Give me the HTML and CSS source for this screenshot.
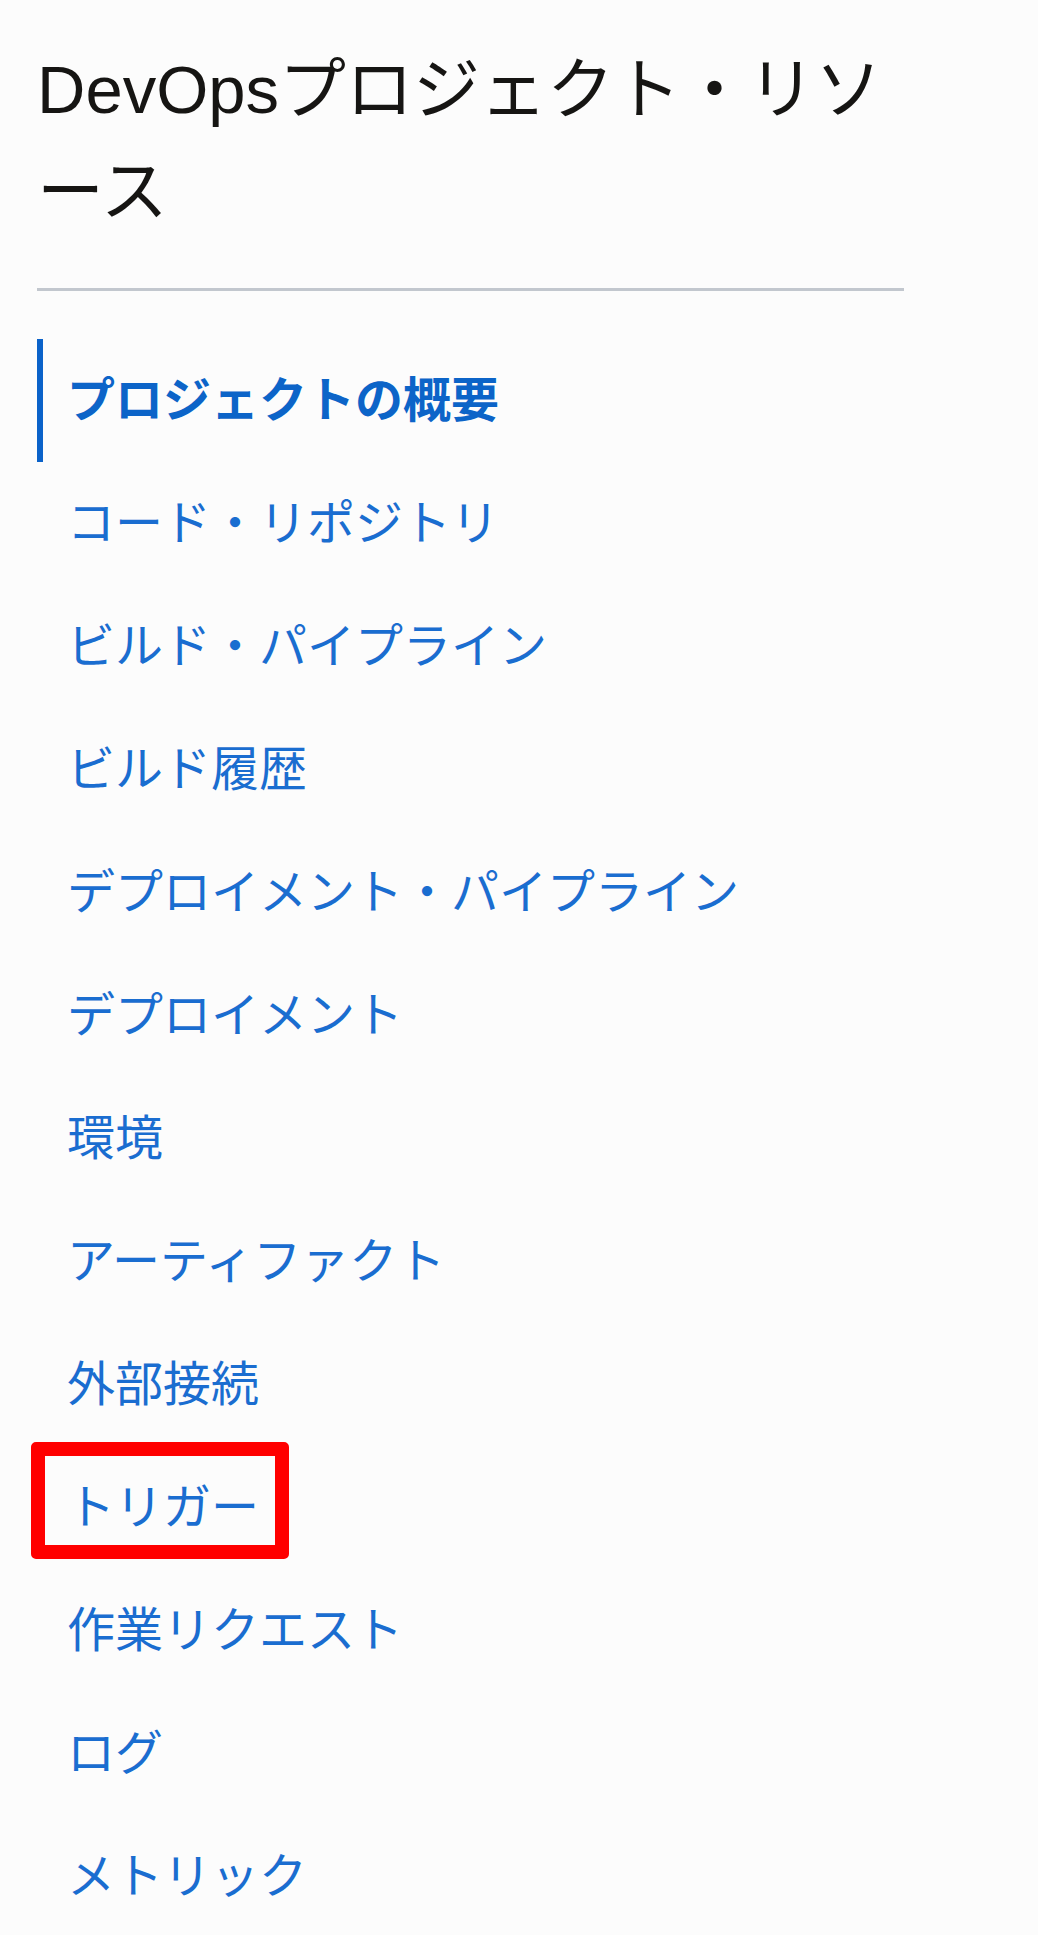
FILE: index.html
```html
<!DOCTYPE html>
<html lang="ja">
<head>
<meta charset="utf-8">
<title>DevOpsプロジェクト・リソース</title>
<link rel="stylesheet" href="styles.css">
</head>
<body>
<div class="panel">
  <h1 class="title">DevOpsプロジェクト・リソース</h1>
  <hr class="divider">
  <nav class="nav">
    <a class="item active" href="#">プロジェクトの概要</a>
    <a class="item" href="#">コード・リポジトリ</a>
    <a class="item" href="#">ビルド・パイプライン</a>
    <a class="item" href="#">ビルド履歴</a>
    <a class="item" href="#">デプロイメント・パイプライン</a>
    <a class="item" href="#">デプロイメント</a>
    <a class="item" href="#">環境</a>
    <a class="item" href="#">アーティファクト</a>
    <a class="item" href="#">外部接続</a>
    <a class="item highlighted" href="#">トリガー<span class="mark"></span></a>
    <a class="item" href="#">作業リクエスト</a>
    <a class="item" href="#">ログ</a>
    <a class="item" href="#">メトリック</a>
  </nav>
</div>
</body>
</html>
```

FILE: styles.css
```css
html, body {
  margin: 0;
  padding: 0;
}
body {
  background: #fcfcfc;
  height: 1935px;
  overflow: hidden;
  font-family: "Liberation Sans", "Noto Sans CJK JP", sans-serif;
}
.panel {
  margin-left: 37px;
  width: 867px;
  padding-top: 39px;
}
.title {
  margin: 0;
  font-weight: normal;
  font-size: 67px;
  line-height: 102px;
  color: #161513;
}
.divider {
  margin: 45px 0 0 0;
  border: none;
  height: 3px;
  background: #c2c7ce;
}
.nav {
  display: flex;
  flex-direction: column;
  margin-top: 48px;
}
.item {
  position: relative;
  display: flex;
  align-items: center;
  height: 123px;
  padding-left: 30px;
  padding-bottom: 10px;
  font-family: "Noto Sans CJK JP", sans-serif;
  font-size: 48px;
  color: #1a6dd0;
  text-decoration: none;
  box-sizing: border-box;
}
.item.active {
  font-weight: bold;
  color: #0c64c8;
  border-left: 6px solid #0b62c9;
  padding-left: 24px;
}
.mark {
  position: absolute;
  left: -6px;
  top: -4px;
  width: 258px;
  height: 117px;
  box-sizing: border-box;
  border: 14px solid #ff0000;
  border-radius: 5px;
}
```
